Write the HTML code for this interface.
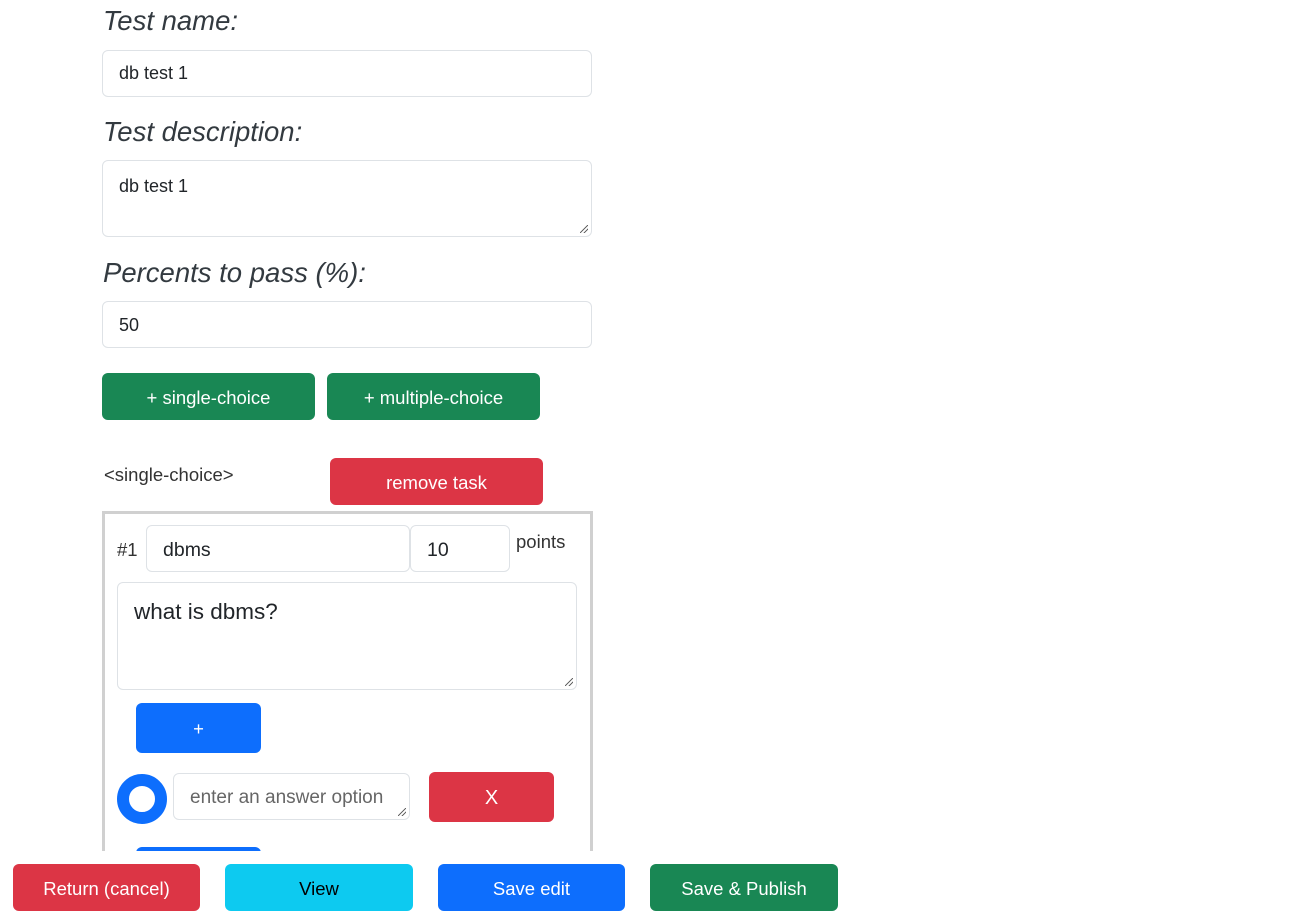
<!DOCTYPE html>
<html><head><style>
*{box-sizing:border-box;margin:0;padding:0}
body{width:1300px;height:914px;background:#fff;font-family:"Liberation Sans","DejaVu Sans",sans-serif;color:#212529;position:relative;overflow:hidden}
.a{position:absolute}
.lbl{font-style:italic;font-size:27.5px;color:#333a40}
.inp{border:1px solid #dee2e6;border-radius:6px;background:#fff;font-size:18px;padding-left:16px;display:flex;align-items:center}
.btn{border-radius:6px;color:#fff;font-size:18.5px;display:flex;align-items:center;justify-content:center;padding-top:2px}
.g{background:#198754}.r{background:#dc3545}.b{background:#0d6efd}.c{background:#0dcaf0;color:#000}
.grip{position:absolute;right:3px;bottom:3px;width:8px;height:8px;background:linear-gradient(135deg,transparent 45%,#666 45%,#666 55%,transparent 55%,transparent 70%,#666 70%,#666 80%,transparent 80%)}
</style></head><body>
<div class="a lbl" style="left:103px;top:5px">Test name:</div>
<div class="a inp" style="left:102px;top:50px;width:490px;height:47px">db test 1</div>
<div class="a lbl" style="left:103px;top:116px">Test description:</div>
<div class="a inp" style="left:102px;top:160px;width:490px;height:77px;align-items:flex-start;padding-top:15px">db test 1<div class="grip"></div></div>
<div class="a lbl" style="left:103px;top:257px">Percents to pass (%):</div>
<div class="a inp" style="left:102px;top:301px;width:490px;height:47px;padding-top:2px">50</div>
<div class="a btn g" style="left:102px;top:373px;width:213px;height:47px">+ single-choice</div>
<div class="a btn g" style="left:327px;top:373px;width:213px;height:47px">+ multiple-choice</div>
<div class="a" style="left:104px;top:464px;font-size:18.5px;color:#333">&lt;single-choice&gt;</div>
<div class="a btn r" style="left:330px;top:458px;width:213px;height:47px">remove task</div>
<div class="a" style="left:102px;top:511px;width:491px;height:360px;border:3px solid #d0d0d0"></div>
<div class="a" style="left:117px;top:539px;font-size:18.5px;color:#333">#1</div>
<div class="a inp" style="left:146px;top:525px;width:264px;height:47px;font-size:19.5px;padding-top:3px">dbms</div>
<div class="a inp" style="left:410px;top:525px;width:100px;height:47px;font-size:19.5px;padding-top:3px">10</div>
<div class="a" style="left:516px;top:531px;font-size:18.5px;color:#333">points</div>
<div class="a inp" style="left:117px;top:582px;width:460px;height:108px;align-items:flex-start;padding-top:16px;font-size:22.5px">what is dbms?<div class="grip"></div></div>
<div class="a btn b" style="left:136px;top:703px;width:125px;height:50px">+</div>
<div class="a" style="left:117px;top:774px;width:50px;height:50px;border-radius:50%;border:12px solid #0d6efd;background:#fff"></div>
<div class="a inp" style="left:173px;top:773px;width:237px;height:47px;font-size:19px;color:#666;padding-top:3px">enter an answer option<div class="grip"></div></div>
<div class="a btn r" style="left:429px;top:772px;width:125px;height:50px;font-size:20px">X</div>
<div class="a b" style="left:136px;top:847px;width:125px;height:20px;border-radius:6px"></div>
<div class="a" style="left:0;top:851px;width:1300px;height:63px;background:#fff"></div>
<div class="a btn r" style="left:13px;top:864px;width:187px;height:47px">Return (cancel)</div>
<div class="a btn c" style="left:225px;top:864px;width:188px;height:47px">View</div>
<div class="a btn b" style="left:438px;top:864px;width:187px;height:47px">Save edit</div>
<div class="a btn g" style="left:650px;top:864px;width:188px;height:47px">Save &amp; Publish</div>
</body></html>
